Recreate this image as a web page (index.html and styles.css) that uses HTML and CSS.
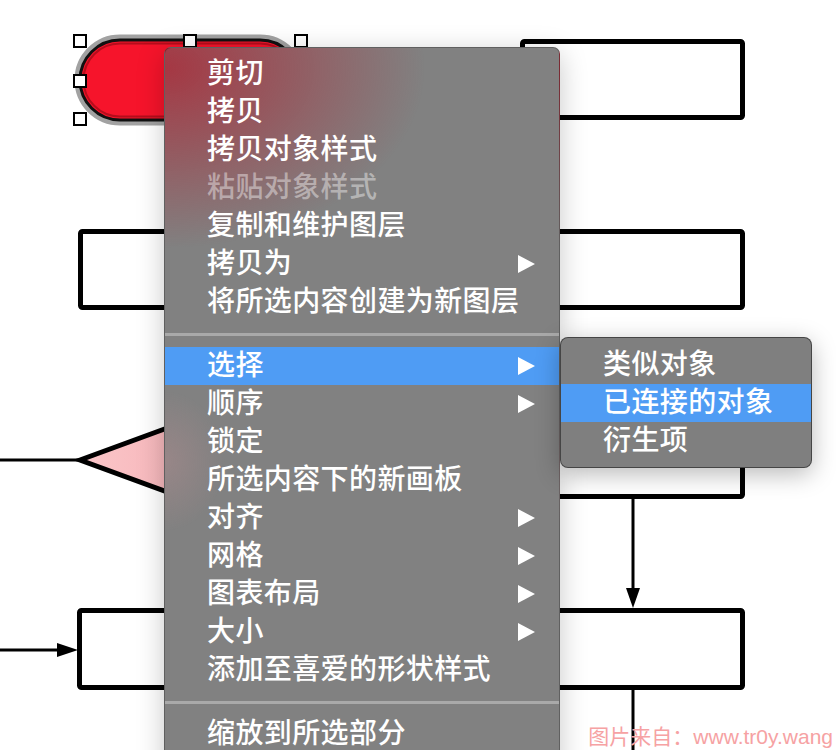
FILE: index.html
```html
<!DOCTYPE html>
<html lang="zh-CN">
<head>
    <meta charset="UTF-8">
    <meta name="viewport" content="width=device-width, initial-scale=1.0">
    <title>右键菜单 - 选择</title>
    <link rel="stylesheet" href="styles.css">
</head>
<body>
    <div class="canvas">
        <!-- 流程图画布 -->
        <svg class="diagram" width="836" height="750" viewBox="0 0 836 750">
            <defs>
                <linearGradient id="pinkFill" x1="0" y1="0" x2="1" y2="0">
                    <stop offset="0" stop-color="#fbc6c9"/>
                    <stop offset="1" stop-color="#f4aeb3"/>
                </linearGradient>
            </defs>

            <!-- 选中的圆角矩形 -->
            <rect x="80" y="40" width="220" height="80" rx="40" fill="none" stroke="#a2a2a2" stroke-width="11"/>
            <rect x="80" y="40" width="220" height="80" rx="40" fill="#f6142b" stroke="#111" stroke-width="3"/>
            <rect x="83.5" y="43.5" width="213" height="73" rx="36.5" fill="none" stroke="rgba(60,0,0,0.35)" stroke-width="2"/>

            <!-- 矩形 -->
            <rect class="box" x="522.5" y="41.5" width="220" height="76" rx="2"/>
            <rect class="box" x="80.5" y="231.5" width="220" height="76" rx="2"/>
            <rect class="box" x="522.5" y="231.5" width="220" height="76" rx="2"/>
            <rect class="box" x="522.5" y="420.5" width="220" height="76" rx="2"/>
            <rect class="box" x="79.5" y="610.5" width="220" height="77" rx="2"/>
            <rect class="box" x="522.5" y="610.5" width="220" height="77" rx="2"/>

            <!-- 三角形 -->
            <line x1="0" y1="460" x2="80" y2="460" stroke="#000" stroke-width="3"/>
            <polygon points="80,460 230,405 230,515" fill="url(#pinkFill)" stroke="#000" stroke-width="5" stroke-linejoin="miter"/>

            <!-- 连接线 -->
            <line x1="633" y1="498" x2="633" y2="590" stroke="#000" stroke-width="3"/>
            <polygon points="626,588 640,588 633,608" fill="#000"/>
            <line x1="633" y1="688" x2="633" y2="750" stroke="#000" stroke-width="3"/>
            <line x1="0" y1="650" x2="60" y2="650" stroke="#000" stroke-width="3"/>
            <polygon points="57,643 57,657 78,650" fill="#000"/>

            <!-- 选择手柄 -->
            <rect class="handle" x="74" y="35" width="12" height="12"/>
            <rect class="handle" x="184" y="35" width="12" height="12"/>
            <rect class="handle" x="295" y="35" width="12" height="12"/>
            <rect class="handle" x="74" y="75" width="12" height="12"/>
            <rect class="handle" x="74" y="113" width="12" height="12"/>
        </svg>

        <!-- 主菜单 -->
        <div class="context-menu">
            <div class="menu-item">剪切</div>
            <div class="menu-item">拷贝</div>
            <div class="menu-item">拷贝对象样式</div>
            <div class="menu-item disabled">粘贴对象样式</div>
            <div class="menu-item">复制和维护图层</div>
            <div class="menu-item has-sub">拷贝为<span class="arrow"></span></div>
            <div class="menu-item">将所选内容创建为新图层</div>
            <div class="separator"></div>
            <div class="menu-item has-sub active">选择<span class="arrow"></span></div>
            <div class="menu-item has-sub">顺序<span class="arrow"></span></div>
            <div class="menu-item">锁定</div>
            <div class="menu-item">所选内容下的新画板</div>
            <div class="menu-item has-sub">对齐<span class="arrow"></span></div>
            <div class="menu-item has-sub">网格<span class="arrow"></span></div>
            <div class="menu-item has-sub">图表布局<span class="arrow"></span></div>
            <div class="menu-item has-sub">大小<span class="arrow"></span></div>
            <div class="menu-item">添加至喜爱的形状样式</div>
            <div class="separator"></div>
            <div class="menu-item">缩放到所选部分</div>
        </div>

        <!-- 子菜单 -->
        <div class="submenu">
            <div class="menu-item">类似对象</div>
            <div class="menu-item active">已连接的对象</div>
            <div class="menu-item">衍生项</div>
        </div>

        <div class="watermark">图片来自：www.tr0y.wang</div>
    </div>
</body>
</html>
```

FILE: styles.css
```css
/* 基础 */
* {
    margin: 0;
    padding: 0;
    box-sizing: border-box;
}

body {
    width: 836px;
    height: 750px;
    overflow: hidden;
    background: #fff;
    font-family: "Noto Sans CJK SC", "Noto Sans", sans-serif;
}

.canvas {
    position: relative;
    width: 836px;
    height: 750px;
}

.diagram {
    display: block;
}

.diagram .box {
    fill: #fff;
    stroke: #000;
    stroke-width: 5;
}

.diagram .handle {
    fill: #fff;
    stroke: #000;
    stroke-width: 2;
}

/* 菜单 */
.context-menu,
.submenu {
    position: absolute;
    display: flex;
    flex-direction: column;
    color: #fff;
    font-size: 28px;
    font-weight: 500;
    letter-spacing: 0.4px;
}

.context-menu {
    left: 164px;
    top: 47px;
    width: 396px;
    height: 740px;
    padding-top: 7px;
    border-radius: 7px;
    border: 1px solid rgba(0, 0, 0, 0.25);
    background:
        radial-gradient(ellipse 260px 180px at 0 20px, rgba(175, 35, 50, 0.78), rgba(128, 128, 128, 0) 100%),
        radial-gradient(ellipse 60px 70px at 0 413px, rgba(220, 150, 155, 0.25), rgba(128, 128, 128, 0) 100%),
        #818181;
    box-shadow: 0 6px 28px rgba(0, 0, 0, 0.22);
}

.submenu {
    left: 560px;
    top: 337px;
    width: 252px;
    padding: 8px 0 7px;
    border-radius: 8px;
    border: 1px solid rgba(0, 0, 0, 0.45);
    background: #7f7f7f;
    box-shadow: 0 6px 24px rgba(0, 0, 0, 0.28);
}

.menu-item {
    display: flex;
    justify-content: space-between;
    align-items: center;
    height: 38px;
    line-height: 32px;
    padding: 0 24px 6px 42px;
    white-space: nowrap;
}

.menu-item.active {
    background: #4f9cf4;
}

.menu-item.disabled {
    color: rgba(255, 255, 255, 0.42);
}

.arrow {
    width: 0;
    height: 0;
    margin-top: 5px;
    border-top: 9px solid transparent;
    border-bottom: 9px solid transparent;
    border-left: 17px solid #fff;
}

.separator {
    height: 26px;
    display: flex;
    align-items: center;
}

.separator::after {
    content: "";
    display: block;
    width: 100%;
    height: 3px;
    background: #a9a9a9;
}

.watermark {
    position: absolute;
    right: 3px;
    bottom: 0;
    font-family: "Liberation Sans", "Noto Sans CJK SC", sans-serif;
    font-size: 21px;
    line-height: 26px;
    color: #f6a2a3;
}
```
